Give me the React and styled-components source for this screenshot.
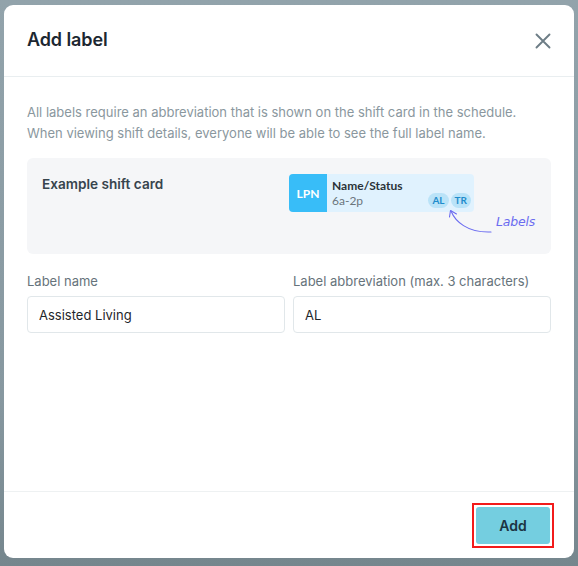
import React from 'react';
import styled, { createGlobalStyle } from 'styled-components';

const GlobalStyle = createGlobalStyle`
  html, body {
    margin: 0;
    padding: 0;
    height: 100%;
  }
  body {
    background: linear-gradient(180deg, #92a3ab 0%, #8798a0 70%, #75868d 100%);
    font-family: Inter, 'Noto Sans', sans-serif;
  }
`;

const Page = styled.div`
  width: 578px;
  height: 566px;
  padding: 5px 4px 8px 4px;
  box-sizing: border-box;
`;

const Modal = styled.div`
  width: 570px;
  height: 553px;
  background: #ffffff;
  border-radius: 9px;
  display: flex;
  flex-direction: column;
  overflow: hidden;
`;

const Header = styled.div`
  height: 72px;
  display: flex;
  align-items: center;
  justify-content: space-between;
  padding: 0 22px 3px 23px;
  border-bottom: 1px solid #e9eef0;
  box-sizing: border-box;
`;

const Title = styled.h2`
  margin: 0;
  font-size: 18px;
  font-weight: 600;
  color: #1c2731;
  letter-spacing: -0.1px;
`;

const CloseBtn = styled.button`
  border: none;
  background: none;
  padding: 0;
  width: 18px;
  height: 18px;
  display: flex;
  align-items: center;
  justify-content: center;
  cursor: pointer;
  margin-top: 3px;
`;

const Body = styled.div`
  flex: 1;
  padding: 25px 23px 0 23px;
`;

const Description = styled.p`
  margin: 0 0 14px 0;
  font-size: 13px;
  line-height: 21px;
  color: #8a979e;
`;

const ExampleBox = styled.div`
  background: #f5f6f8;
  border-radius: 6px;
  height: 96px;
  box-sizing: border-box;
  padding: 16px 15px;
  display: grid;
  grid-template-columns: 247px auto;
  position: relative;
`;

const ExampleTitle = styled.div`
  font-size: 13.6px;
  font-weight: 600;
  color: #37444d;
  line-height: 20px;
`;

const ShiftCard = styled.div`
  width: 185px;
  height: 38px;
  display: flex;
  border-radius: 4px;
  background: #e0f2fe;
  overflow: hidden;
  font-family: Lato, 'Noto Sans', sans-serif;
`;

const Role = styled.div`
  width: 38px;
  background: #38bdf8;
  color: #ffffff;
  font-weight: 700;
  font-size: 12px;
  display: flex;
  align-items: center;
  justify-content: center;
`;

const ShiftInfo = styled.div`
  flex: 1;
  padding: 4px 3px 0 5px;
  display: flex;
  flex-direction: column;
`;

const ShiftName = styled.div`
  font-size: 12px;
  font-weight: 700;
  color: #2b3238;
  line-height: 15px;
`;

const ShiftRow = styled.div`
  display: flex;
  align-items: center;
  justify-content: space-between;
`;

const ShiftTime = styled.span`
  font-size: 12px;
  color: #6b757c;
  line-height: 15px;
`;

const Pills = styled.div`
  display: flex;
  gap: 2px;
  margin-top: 0;
`;

const Pill = styled.span`
  height: 15px;
  padding: 0 4px;
  min-width: 11px;
  border-radius: 8px;
  background: #bae3f8;
  color: #1f8ccc;
  font-size: 10px;
  font-weight: 700;
  line-height: 15px;
  text-align: center;
`;

const Annotation = styled.div`
  position: absolute;
  left: 420px;
  top: 49px;
  width: 110px;
  height: 40px;
`;

const AnnotationText = styled.span`
  position: absolute;
  left: 49px;
  top: 7px;
  font-family: 'DejaVu Sans', sans-serif;
  font-style: italic;
  font-size: 12.5px;
  color: #6b6cf0;
  letter-spacing: -0.2px;
`;

const Fields = styled.div`
  display: grid;
  grid-template-columns: 1fr 1fr;
  gap: 8px;
  margin-top: 17px;
`;

const Field = styled.label`
  display: flex;
  flex-direction: column;
`;

const FieldLabel = styled.span`
  font-size: 13px;
  color: #66737b;
  line-height: 20px;
  margin-bottom: 5px;
`;

const Input = styled.input`
  height: 37px;
  box-sizing: border-box;
  border: 1px solid #e1e7ea;
  border-radius: 4px;
  padding: 0 11px;
  font-family: Inter, 'Noto Sans', sans-serif;
  font-size: 13px;
  color: #1f262b;
  outline: none;
`;

const Footer = styled.div`
  height: 67px;
  border-top: 1px solid #eef1f2;
  box-sizing: border-box;
  display: flex;
  justify-content: flex-end;
  align-items: flex-start;
  padding: 11px 20px 0 0;
`;

const Highlight = styled.div`
  border: 2px solid #f21b1b;
  padding: 2px;
`;

const PrimaryButton = styled.button`
  width: 74px;
  height: 37px;
  border: none;
  border-radius: 3px;
  background: #74cee0;
  color: #1c3442;
  font-family: Inter, 'Noto Sans', sans-serif;
  font-size: 14px;
  font-weight: 600;
  cursor: pointer;
  display: block;
`;

export default function App() {
  return (
    <>
      <GlobalStyle />
      <Page>
        <Modal>
          <Header>
            <Title>Add label</Title>
            <CloseBtn aria-label="Close">
              <svg width="16" height="16" viewBox="0 0 16 16">
                <path d="M1.5 1.5 L14.5 14.5 M14.5 1.5 L1.5 14.5" stroke="#6d7d86" strokeWidth="1.9" strokeLinecap="round" />
              </svg>
            </CloseBtn>
          </Header>
          <Body>
            <Description>
              All labels require an abbreviation that is shown on the shift card in the schedule.
              <br />
              When viewing shift details, everyone will be able to see the full label name.
            </Description>
            <ExampleBox>
              <ExampleTitle>Example shift card</ExampleTitle>
              <ShiftCard>
                <Role>LPN</Role>
                <ShiftInfo>
                  <ShiftName>Name/Status</ShiftName>
                  <ShiftRow>
                    <ShiftTime>6a-2p</ShiftTime>
                    <Pills>
                      <Pill>AL</Pill>
                      <Pill>TR</Pill>
                    </Pills>
                  </ShiftRow>
                </ShiftInfo>
              </ShiftCard>
              <Annotation>
                <svg width="60" height="40" viewBox="0 0 60 40">
                  <path d="M4 4 C 8 14, 20 26, 44 25" fill="none" stroke="#6b6cf0" strokeWidth="1.1" strokeLinecap="round" />
                  <path d="M2.5 10 L3.5 3.5 L9.5 7" fill="none" stroke="#6b6cf0" strokeWidth="1.1" strokeLinecap="round" strokeLinejoin="round" />
                </svg>
                <AnnotationText>Labels</AnnotationText>
              </Annotation>
            </ExampleBox>
            <Fields>
              <Field>
                <FieldLabel>Label name</FieldLabel>
                <Input defaultValue="Assisted Living" />
              </Field>
              <Field>
                <FieldLabel>Label abbreviation (max. 3 characters)</FieldLabel>
                <Input defaultValue="AL" />
              </Field>
            </Fields>
          </Body>
          <Footer>
            <Highlight>
              <PrimaryButton>Add</PrimaryButton>
            </Highlight>
          </Footer>
        </Modal>
      </Page>
    </>
  );
}
